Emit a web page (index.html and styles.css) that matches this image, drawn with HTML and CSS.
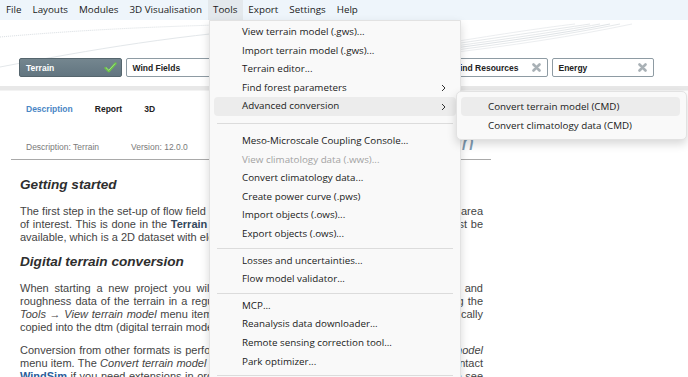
FILE: index.html
```html
<!DOCTYPE html>
<html lang="en">
<head>
<meta charset="UTF-8">
<title>WindSim - Terrain</title>
<link rel="stylesheet" href="styles.css">
</head>
<body>
  <!-- main menu -->
  <div class="menubar">
    <span class="mb-item">File</span>
    <span class="mb-item">Layouts</span>
    <span class="mb-item">Modules</span>
    <span class="mb-item">3D Visualisation</span>
    <span class="mb-item active">Tools</span>
    <span class="mb-item">Export</span>
    <span class="mb-item">Settings</span>
    <span class="mb-item">Help</span>
  </div>

  <!-- module tabs -->
  <div class="header">
    <svg class="deco" width="688" height="66" viewBox="0 0 688 66">
      <path d="M0 17 C 80 10, 160 6, 260 4" stroke="#d9dee2" stroke-dasharray="1 1" fill="none"/>
      <path d="M0 47 C 90 30, 180 14, 300 6" stroke="#e3e7ea" fill="none"/>
      <path d="M440 30 C 500 22, 560 14, 610 4" stroke="#dfe3e6" fill="none"/>
      <path d="M440 28 C 500 20, 555 12, 600 4" stroke="#e6e9eb" fill="none"/>
      <path d="M440 26 C 495 18, 550 10, 590 4" stroke="#e6e9eb" fill="none"/>
      <path d="M440 32 C 505 24, 565 15, 620 4" stroke="#e6e9eb" fill="none"/>
      <path d="M440 34 C 510 26, 575 16, 632 4" stroke="#eceef0" fill="none"/>
      <path d="M440 24 C 490 16, 540 8, 575 4" stroke="#eceef0" fill="none"/>
    </svg>
    <div class="modules">
      <div class="module done">
        <span>Terrain</span>
        <svg class="check" width="13" height="11" viewBox="0 0 13 11"><path d="M1.5 6 L4.8 9.2 L11.5 1.5" stroke="#6cc24a" stroke-width="2.4" fill="none" stroke-linecap="round" stroke-linejoin="round"/><path d="M2 5.6 L4.8 8.3 L11 1.6" stroke="#a9e68f" stroke-width="0.8" fill="none"/></svg>
      </div>
      <div class="module"><span>Wind Fields</span><svg class="close" width="9" height="9" viewBox="0 0 9 9"><path d="M1.5 1.5 L7.5 7.5 M7.5 1.5 L1.5 7.5" stroke="#a9b1b6" stroke-width="2.6" stroke-linecap="round"/></svg></div>
      <div class="module"><span>Objects</span><svg class="close" width="9" height="9" viewBox="0 0 9 9"><path d="M1.5 1.5 L7.5 7.5 M7.5 1.5 L1.5 7.5" stroke="#a9b1b6" stroke-width="2.6" stroke-linecap="round"/></svg></div>
      <div class="module"><span>Results</span><svg class="close" width="9" height="9" viewBox="0 0 9 9"><path d="M1.5 1.5 L7.5 7.5 M7.5 1.5 L1.5 7.5" stroke="#a9b1b6" stroke-width="2.6" stroke-linecap="round"/></svg></div>
      <div class="module"><span>Wind Resources</span><svg class="close" width="9" height="9" viewBox="0 0 9 9"><path d="M1.5 1.5 L7.5 7.5 M7.5 1.5 L1.5 7.5" stroke="#a9b1b6" stroke-width="2.6" stroke-linecap="round"/></svg></div>
      <div class="module"><span>Energy</span><svg class="close" width="9" height="9" viewBox="0 0 9 9"><path d="M1.5 1.5 L7.5 7.5 M7.5 1.5 L1.5 7.5" stroke="#a9b1b6" stroke-width="2.6" stroke-linecap="round"/></svg></div>
    </div>
  </div>
  <div class="band"></div>

  <!-- description panel -->
  <div class="doc">
    <div class="doc-tabs">
      <span class="doc-tab active">Description</span>
      <span class="doc-tab">Report</span>
      <span class="doc-tab">3D</span>
    </div>
    <div class="doc-info">
      <span>Description: Terrain</span>
      <span>Version: 12.0.0</span>
      <span class="doc-title">Terrain</span>
    </div>
    <div class="doc-body">
      <h2>Getting started</h2>
      <p>The first step in the set-up of flow field simulations is to create a digital model of the whole area of interest. This is done in the <b class="mod">Terrain</b> module. Before starting, a digital terrain model must be available, which is a 2D dataset with elevation and roughness data.</p>
      <h2>Digital terrain conversion</h2>
      <p>When starting a new project you will be asked to import the digital terrain <a>elevation</a> and roughness data of the terrain in a regular grid format (.gws). This is easily done by using the <i>Tools &rarr; View terrain model</i> menu item. The selected data files will then also be automatically copied into the dtm (digital terrain model) folder of the project.</p>
      <p>Conversion from other formats is performed with the dedicated <i>Tools &rarr; Convert terrain model</i> menu item. The <i>Convert terrain model</i> tool supports the most common formats. Please contact <b class="brand">WindSim</b> if you need extensions in order to read or convert other file formats, and please see the user manual for further details.</p>
    </div>
  </div>

  <!-- open Tools menu -->
  <div class="dropdown">
    <div class="dd-item">View terrain model (.gws)...</div>
    <div class="dd-item">Import terrain model (.gws)...</div>
    <div class="dd-item">Terrain editor...</div>
    <div class="dd-item sub">Find forest parameters<svg class="chev" width="5" height="8" viewBox="0 0 5 8"><path d="M1 1 L4 4 L1 7" stroke="#333" fill="none"/></svg></div>
    <div class="dd-item sub hover">Advanced conversion<svg class="chev" width="5" height="8" viewBox="0 0 5 8"><path d="M1 1 L4 4 L1 7" stroke="#333" fill="none"/></svg></div>
    <div class="sep wide"></div>
    <div class="dd-item">Meso-Microscale Coupling Console...</div>
    <div class="dd-item disabled">View climatology data (.wws)...</div>
    <div class="dd-item">Convert climatology data...</div>
    <div class="dd-item">Create power curve (.pws)</div>
    <div class="dd-item">Import objects (.ows)...</div>
    <div class="dd-item">Export objects (.ows)...</div>
    <div class="sep"></div>
    <div class="dd-item">Losses and uncertainties...</div>
    <div class="dd-item">Flow model validator...</div>
    <div class="sep"></div>
    <div class="dd-item">MCP...</div>
    <div class="dd-item">Reanalysis data downloader...</div>
    <div class="dd-item">Remote sensing correction tool...</div>
    <div class="dd-item">Park optimizer...</div>
    <div class="sep"></div>
    <div class="dd-item">Options...</div>
  </div>

  <div class="submenu">
    <div class="dd-item hover">Convert terrain model (CMD)</div>
    <div class="dd-item">Convert climatology data (CMD)</div>
  </div>
</body>
</html>
```

FILE: styles.css
```css
body {
    margin: 0;
    width: 688px;
    height: 377px;
    overflow: hidden;
    background: #ffffff;
    font-family: 'Liberation Sans', Arial, sans-serif;
    position: relative;
}

/* menu bar */
.menubar {
    height: 20px;
    background: #eef5fb;
    display: flex;
    padding-left: 0.5px;
    font-family: 'Open Sans', 'Noto Sans', sans-serif;
    font-size: 9.8px;
    color: #1a1a1a;
}
.mb-item {
    padding: 0 5.5px;
    line-height: 20px;
}
.mb-item.active {
    background: #e3e8ec;
}

/* header with module tabs */
.header {
    position: relative;
    height: 66px;
    background: #ffffff;
}
.deco {
    position: absolute;
    left: 0;
    top: 0;
}
.modules {
    position: relative;
    display: flex;
    gap: 4px;
    padding: 38px 0 0 19px;
}
.module {
    flex: none;
    width: 102.5px;
    height: 19px;
    box-sizing: border-box;
    border: 1px solid #8e9ba3;
    border-radius: 2px;
    background: #ffffff;
    display: flex;
    align-items: center;
    justify-content: space-between;
    padding: 0 6px;
    font-size: 8.5px;
    font-weight: bold;
    color: #222;
}
.module.done {
    background: linear-gradient(#74868f, #627580);
    border-color: #55656d;
    color: #ffffff;
    padding-right: 4px;
}
.band {
    height: 4px;
    background: #e8e8e8;
    border-bottom: 1px solid #f3f3f3;
}

/* description panel */
.doc {
    width: 480px;
    margin-left: 11px;
}
.doc-tabs {
    display: flex;
    gap: 22px;
    padding: 13px 0 0 15px;
    height: 22px;
    line-height: 10px;
    font-size: 8.5px;
    font-weight: bold;
    color: #222;
}
.doc-tab.active {
    color: #4a86c5;
}
.doc-info {
    display: flex;
    align-items: baseline;
    padding: 4px 17px 0 15px;
    height: 29px;
    border-bottom: 1px solid #a9a9a9;
    font-size: 8.5px;
    color: #7a7a7a;
}
.doc-info span:nth-child(2) {
    margin-left: 32px;
}
.doc-title {
    margin-left: auto;
    font-size: 22px;
    font-style: italic;
    color: #7f9cb3;
}
.doc-body {
    padding: 17px 8px 0 9px;
    color: #444;
}
.doc-body h2 {
    margin: 0 0 12px;
    font-size: 13.6px;
    line-height: 16px;
    font-style: italic;
    font-weight: bold;
    color: #2e2e2e;
}
.doc-body p {
    margin: 0 0 10px;
    font-size: 11px;
    line-height: 13px;
    text-align: justify;
}
.doc-body p + h2 {
    margin-top: 10px;
}
.doc-body .mod {
    color: #34495e;
}
.doc-body a {
    color: #4a86c5;
}
.doc-body .brand {
    color: #2a5d9a;
}

/* dropdown menus */
.dropdown, .submenu {
    position: absolute;
    background: #f9f9f9;
    border: 1px solid #e2e2e2;
    border-radius: 5px;
    box-shadow: 0 4px 10px rgba(0, 0, 0, 0.16);
    font-family: 'Open Sans', 'Noto Sans', sans-serif;
    font-size: 9.8px;
    color: #1a1a1a;
    box-sizing: border-box;
}
.dropdown {
    left: 209px;
    top: 20px;
    width: 252px;
    padding: 2px 4px 4px;
    border-top-left-radius: 0;
    border-top-right-radius: 0;
}
.submenu {
    left: 456px;
    top: 91px;
    width: 231px;
    padding: 5px 6px 4px 4px;
}
.dd-item {
    height: 18.6px;
    line-height: 18.6px;
    padding-left: 28px;
    padding-right: 8px;
    border-radius: 4px;
    display: flex;
    align-items: center;
    justify-content: space-between;
}
.submenu .dd-item {
    height: 19px;
    line-height: 19px;
    padding-left: 27px;
}
.dd-item.hover {
    background: #ececec;
}
.dd-item.disabled {
    color: #a3a3a3;
}
.chev {
    margin-right: 2px;
}
.sep {
    height: 1px;
    background: #dcdcdc;
    margin: 4px 3px 3px;
}
.sep.wide {
    margin: 7px 3px 8px;
}
```
